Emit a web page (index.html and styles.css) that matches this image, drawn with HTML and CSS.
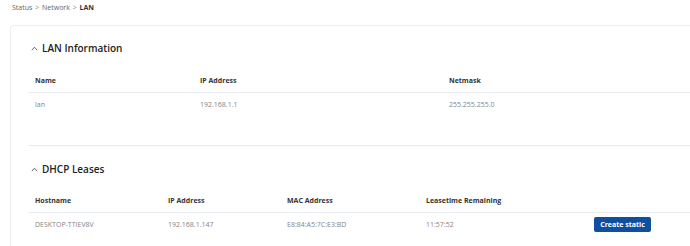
FILE: index.html
```html
<!DOCTYPE html>
<html>

<head>
  <link rel="stylesheet" href="styles.css">
  <title>LAN - Status</title>
</head>

<body>
  <div class="crumbs">
    <span>Status</span>
    <span class="sep">&gt;</span>
    <span>Network</span>
    <span class="sep">&gt;</span>
    <b>LAN</b>
  </div>

  <div class="card">
    <div class="section first">
      <h2>
        <svg class="chev" width="7" height="5" viewBox="0 0 7 5"><polyline points="0.8,4.2 3.5,1.2 6.2,4.2" /></svg>
        LAN Information
      </h2>
      <table class="lan">
        <tr>
          <th class="c1">Name</th>
          <th class="c2">IP Address</th>
          <th>Netmask</th>
        </tr>
        <tr>
          <td>lan</td>
          <td>192.168.1.1</td>
          <td>255.255.255.0</td>
        </tr>
      </table>
    </div>

    <div class="section second">
      <h2>
        <svg class="chev" width="7" height="5" viewBox="0 0 7 5"><polyline points="0.8,4.2 3.5,1.2 6.2,4.2" /></svg>
        DHCP Leases
      </h2>
      <table class="leases">
        <tr>
          <th class="d1">Hostname</th>
          <th class="d2">IP Address</th>
          <th class="d3">MAC Address</th>
          <th class="d4">Leasetime Remaining</th>
          <th></th>
        </tr>
        <tr>
          <td>DESKTOP-TTIEV8V</td>
          <td>192.168.1.147</td>
          <td>E8:84:A5:7C:E3:BD</td>
          <td>11:57:52</td>
          <td><button type="button" class="btn">Create static</button></td>
        </tr>
      </table>
    </div>
  </div>
</body>

</html>
```

FILE: styles.css
```css
html,
body {
  margin: 0;
  font-family: "Open Sans", "Liberation Sans", sans-serif;
  color: #333333;
  background-color: #ffffff;
}

.crumbs {
  padding: 2px 0 0 12px;
  height: 23px;
  font-size: 7px;
  line-height: 12px;
  color: #666666;
}

.crumbs .sep {
  margin: 0 1px;
  color: #888888;
}

.crumbs b {
  color: #333333;
  font-weight: 700;
}

.card {
  margin-left: 10px;
  padding-left: 17px;
  border-left: 1px solid #eeeeee;
  border-top: 1px solid #eeeeee;
  border-top-left-radius: 4px;
  height: 230px;
}

.section h2 {
  display: flex;
  align-items: center;
  gap: 4px;
  margin: 0;
  padding: 12px 0 0 3px;
  height: 20px;
  font-size: 10px;
  font-weight: 600;
  color: #222222;
}

.chev {
  fill: none;
  stroke: #555555;
  stroke-width: 0.9;
}

.section.first {
  padding-bottom: 30px;
  border-bottom: 1px solid #e8ebef;
}

.section.second {
  padding-top: 1px;
}

table {
  margin-top: 10px;
  width: 100%;
  border-collapse: collapse;
  font-size: 7px;
}

.second table {
  margin-top: 9px;
}

th {
  height: 24px;
  padding: 0 0 0 7px;
  text-align: left;
  font-weight: 700;
  color: #333333;
  border-bottom: 1px solid #e8ebef;
}

td {
  height: 22px;
  padding: 0 0 0 7px;
  text-align: left;
  color: #858585;
}

.c1 {
  width: 158px;
}

.c2 {
  width: 242px;
}

.d1 {
  width: 126px;
}

.d2 {
  width: 112px;
}

.d3 {
  width: 132px;
}

.d4 {
  width: 161px;
}

.btn {
  font-family: "Open Sans", "Liberation Sans", sans-serif;
  font-size: 7px;
  font-weight: 700;
  color: #ffffff;
  background-color: #0e4f9f;
  border: none;
  border-radius: 2px;
  width: 57px;
  height: 15px;
  padding: 0;
}
```
